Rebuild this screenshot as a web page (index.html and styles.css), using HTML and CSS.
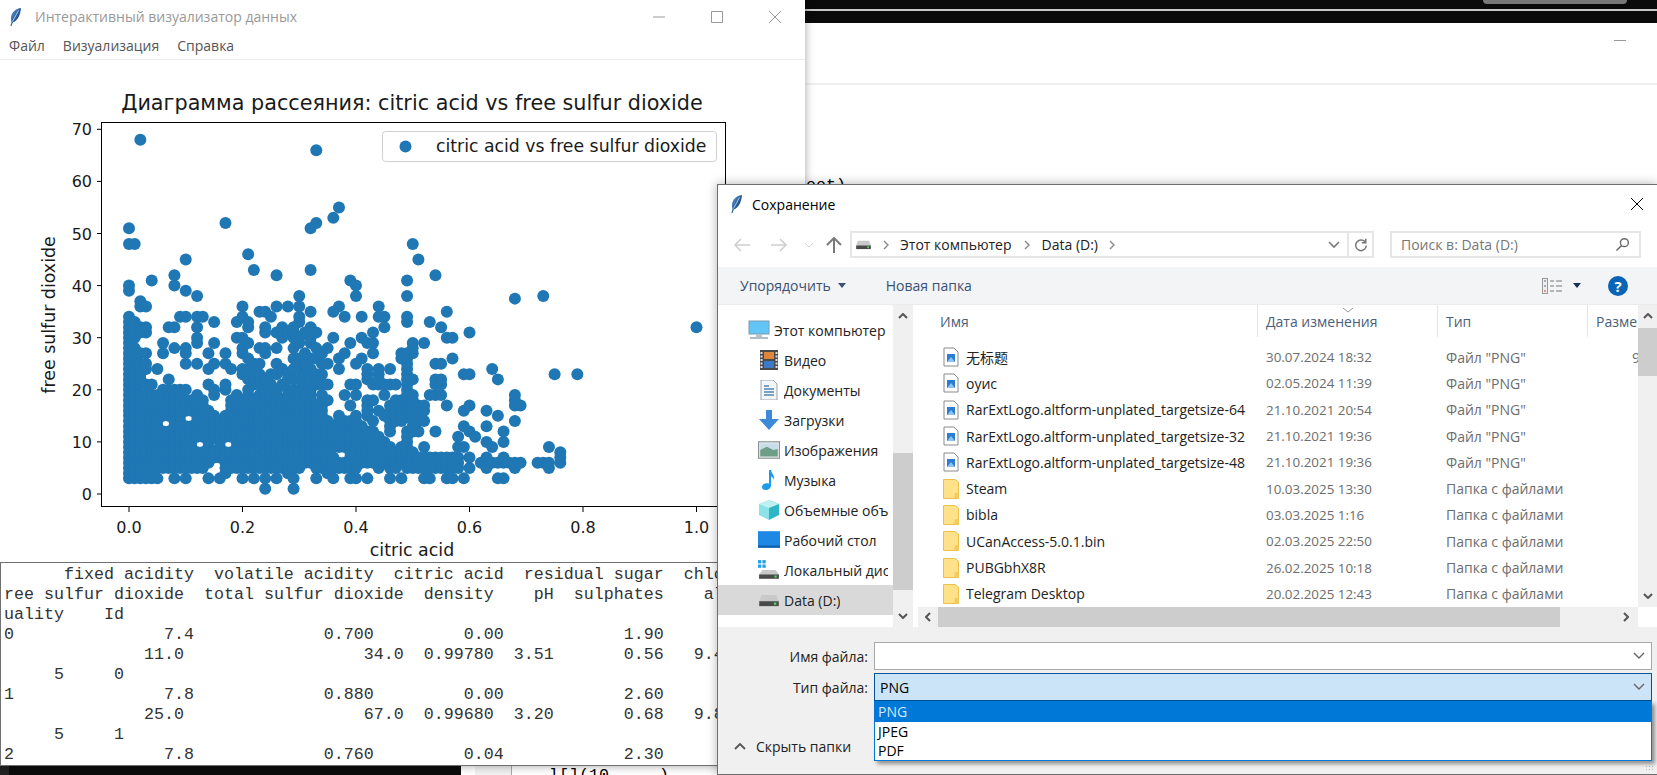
FILE: index.html
```html
<!DOCTYPE html>
<html>
<head>
    <meta charset="utf-8">
    <title>Сохранение</title>
    <link rel="stylesheet" href="styles.css">
</head>
<body>
    <svg class="defs" width="0" height="0">
        <defs>
            <linearGradient id="quill" x1="0" y1="0" x2="1" y2="1">
                <stop offset="0" stop-color="#6aa8e0"/>
                <stop offset="0.5" stop-color="#2a5f9e"/>
                <stop offset="1" stop-color="#0c1a2e"/>
            </linearGradient>
            <symbol id="i-feather" viewBox="0 0 14 20">
                <path d="M13 1C8 1.500 3.500 5 3 10.500C2.800 12.500 3.200 14 3.600 15L2.400 19L3.400 19.300L4.800 15.500C9.500 14 12.500 8 13 1Z" fill="url(#quill)"/>
                <path d="M10.500 3.500L4.500 14.500" stroke="#e8f2fb" stroke-width=".7"/>
            </symbol>
            <symbol id="i-png" viewBox="0 0 16 20">
                <path d="M1 1H11L15 5V19H1Z" fill="#fff" stroke="#8a8a8a"/>
                <rect x="4" y="7" width="8" height="8" fill="#2b7cd3"/>
                <path d="M4 15L8 10L12 15Z" fill="#8fc3f0"/>
            </symbol>
            <symbol id="i-folder" viewBox="0 0 16 20">
                <path d="M.5 .5H12L15.500 3V19.500H.5Z" fill="#ffe18a" stroke="#edc04e"/>
                <path d="M12 14H15.500V19.500H11Z" fill="#f4cb5e"/>
            </symbol>
            <symbol id="i-drive" viewBox="0 0 18 12">
                <path d="M3 2H15L17 7H1Z" fill="#c9c9c9"/>
                <rect x="1" y="7" width="16" height="4" fill="#4a4a4a"/>
                <rect x="13" y="8" width="2" height="2" fill="#4ed36a"/>
            </symbol>
            <symbol id="i-monitor" viewBox="0 0 22 20">
                <rect x="1" y="1" width="20" height="13" fill="#63c5f5" stroke="#7a9cb5"/>
                <rect x="8" y="14" width="6" height="3" fill="#b7c4cd"/>
                <rect x="2" y="17" width="18" height="2" fill="#aebdc8"/>
            </symbol>
            <symbol id="i-video" viewBox="0 0 20 20">
                <rect x="1" y="0" width="18" height="20" fill="#4a4a4a"/>
                <rect x="5" y="2" width="10" height="7" fill="#e0863a"/>
                <rect x="5" y="11" width="10" height="7" fill="#3a79c8"/>
                <path d="M2.500 2V18M17.500 2V18" stroke="#ddd" stroke-width="2" stroke-dasharray="2 1.500"/>
            </symbol>
            <symbol id="i-docs" viewBox="0 0 20 20">
                <path d="M2 0H14L18 4V20H2Z" fill="#f3f6f9" stroke="#9aa5ad"/>
                <path d="M5 6H10M5 9H15M5 12H15M5 15H15" stroke="#4f86b8" stroke-width="1.400"/>
            </symbol>
            <symbol id="i-down" viewBox="0 0 20 20">
                <path d="M7 0H13V9H20L10 20L0 9H7Z" fill="#3f8ad8"/>
            </symbol>
            <symbol id="i-pictures" viewBox="0 0 20 16">
                <rect x=".5" y=".5" width="19" height="15" fill="#e4e8ea" stroke="#8d9396"/>
                <rect x="2" y="2" width="16" height="6" fill="#c7ddea"/>
                <path d="M2 8L8 5L14 8L18 7V14H2Z" fill="#6f9e86"/>
            </symbol>
            <symbol id="i-music" viewBox="0 0 20 20">
                <path d="M10 0H12C12.500 4 16 5 15 10C14.500 7.500 13 7 12 6.500V15.500C12 18 9.500 20 6.500 20C4 20 3 18.500 3 17C3 14.500 6 12.500 10 13.500Z" fill="#1e9be8"/>
            </symbol>
            <symbol id="i-cube" viewBox="0 0 20 20">
                <path d="M10 0L20 4V15L10 20Z" fill="#2fb5c4"/>
                <path d="M10 0L0 4V15L10 20Z" fill="#8be3e6"/>
                <path d="M10 0L20 4L10 8L0 4Z" fill="#bff1f2"/>
            </symbol>
            <symbol id="i-desktop" viewBox="0 0 20 16">
                <rect x="0" y="0" width="20" height="15" fill="#1e88e5"/>
                <rect x="0" y="13" width="20" height="2" fill="#0f5fa8"/>
            </symbol>
            <symbol id="i-localdisk" viewBox="0 0 20 18">
                <rect x="0" y="0" width="3" height="3" fill="#24a0ed"/>
                <rect x="4" y="0" width="3" height="3" fill="#24a0ed"/>
                <rect x="0" y="4" width="3" height="3" fill="#24a0ed"/>
                <rect x="4" y="4" width="3" height="3" fill="#24a0ed"/>
                <path d="M4 9H16L19 13H1Z" fill="#c9c9c9"/>
                <rect x="1" y="13" width="18" height="4" fill="#4a4a4a"/>
                <rect x="15" y="14" width="2" height="2" fill="#4ed36a"/>
            </symbol>
        </defs>
    </svg>

    <!-- окно на заднем плане -->
    <div class="back-strip"><div class="back-tab"></div></div>
    <div class="back-minimize"></div>
    <div class="back-rule"></div>
    <div class="back-code">oot)</div>
    <div class="taskbar">
        <div class="taskbar-dark"></div>
        <div class="taskbar-gutter"></div>
        <div class="taskbar-code">l[](10,    )</div>
    </div>

    <!-- главное окно -->
    <div class="window main-window">
        <div class="title-bar">
            <svg class="feather"><use href="#i-feather"/></svg>
            <div class="title">Интерактивный визуализатор данных</div>
            <div class="window-buttons">
                <svg class="win-btn" viewBox="0 0 12 12"><path d="M0 6H12"/></svg>
                <svg class="win-btn" viewBox="0 0 12 12"><path d="M.5 .5H11.500V11.500H.5Z"/></svg>
                <svg class="win-btn" viewBox="0 0 12 12"><path d="M0 0L12 12M12 0L0 12"/></svg>
            </div>
        </div>
        <div class="menu-bar">
            <span>Файл</span>
            <span>Визуализация</span>
            <span>Справка</span>
        </div>
        <svg id="chart" class="chart" viewBox="0 60 805 502">
            <text class="chart-title" x="412" y="110">Диаграмма рассеяния: citric acid vs free sulfur dioxide</text>
            <g id="points"></g>
            <rect class="frame" x="101.500" y="122.500" width="624" height="384"/>
            <path class="ticks" d="M97 494H102M97 441.900H102M97 389.800H102M97 337.700H102M97 285.600H102M97 233.500H102M97 181.400H102M97 129.300H102M129 507V512M242.500 507V512M356 507V512M469.500 507V512M583 507V512M696.500 507V512"/>
            <g class="y-labels">
                <text x="92" y="500">0</text>
                <text x="92" y="448">10</text>
                <text x="92" y="396">20</text>
                <text x="92" y="344">30</text>
                <text x="92" y="292">40</text>
                <text x="92" y="240">50</text>
                <text x="92" y="187">60</text>
                <text x="92" y="135">70</text>
            </g>
            <g class="x-labels">
                <text x="129" y="533">0.0</text>
                <text x="242.500" y="533">0.2</text>
                <text x="356" y="533">0.4</text>
                <text x="469.500" y="533">0.6</text>
                <text x="583" y="533">0.8</text>
                <text x="696.500" y="533">1.0</text>
            </g>
            <text class="axis-label" x="412" y="556">citric acid</text>
            <text class="axis-label" transform="translate(55 315) rotate(-90)">free sulfur dioxide</text>
            <rect class="legend" x="382.500" y="131.500" width="334" height="30" rx="3"/>
            <circle class="dot" cx="405.500" cy="146.500" r="6"/>
            <text class="legend-text" x="436" y="152">citric acid vs free sulfur dioxide</text>
        </svg>
        <pre class="console">      fixed acidity  volatile acidity  citric acid  residual sugar  chlorides  \
ree sulfur dioxide  total sulfur dioxide  density    pH  sulphates    alcohol  \
uality    Id
0               7.4             0.700         0.00            1.90
              11.0                  34.0  0.99780  3.51       0.56   9.4
     5     0
1               7.8             0.880         0.00            2.60
              25.0                  67.0  0.99680  3.20       0.68   9.8
     5     1
2               7.8             0.760         0.04            2.30</pre>
    </div>

    <!-- диалог сохранения -->
    <div class="window dialog">
        <div class="dialog-title">
            <svg class="feather"><use href="#i-feather"/></svg>
            <div class="dialog-caption">Сохранение</div>
            <svg class="dialog-close" viewBox="0 0 12 12"><path d="M0 0L12 12M12 0L0 12"/></svg>
        </div>

        <div class="nav-row">
            <div class="nav-arrows">
                <svg class="nav-arrow" viewBox="0 0 18 14"><path d="M8 1L2 7L8 13M2 7H17"/></svg>
                <svg class="nav-arrow" viewBox="0 0 18 14"><path d="M10 1L16 7L10 13M16 7H1"/></svg>
                <svg class="nav-drop" viewBox="0 0 12 8"><path d="M2 2L6 6L10 2"/></svg>
                <svg class="nav-arrow up" viewBox="0 0 18 16"><path d="M2 8L9 1L16 8M9 1V16"/></svg>
            </div>
            <div class="address">
                <svg class="crumb-drive"><use href="#i-drive"/></svg>
                <svg class="crumb-sep" viewBox="0 0 28 10"><path d="M12 1L16 5L12 9"/></svg>
                <span>Этот компьютер</span>
                <svg class="crumb-sep wide" viewBox="0 0 30 10"><path d="M13 1L17 5L13 9"/></svg>
                <span>Data (D:)</span>
                <svg class="crumb-sep" viewBox="0 0 28 10"><path d="M12 1L16 5L12 9"/></svg>
                <svg class="address-drop" viewBox="0 0 12 8"><path d="M1 1L6 6L11 1"/></svg>
                <div class="refresh">
                    <svg viewBox="0 0 14 14"><path d="M11.500 4.500A5.300 5.300 0 1 0 12.300 7.500M11.800 .8V4.800H7.800"/></svg>
                </div>
            </div>
            <div class="search">
                <span>Поиск в: Data (D:)</span>
                <svg viewBox="0 0 16 16"><circle cx="10" cy="6" r="4.200"/><path d="M7 9.200L1.500 14.500"/></svg>
            </div>
        </div>

        <div class="toolbar">
            <span>Упорядочить</span>
            <span class="caret"></span>
            <span class="new-folder">Новая папка</span>
            <svg class="view-icon" viewBox="0 0 20 16">
                <rect x=".5" y=".5" width="5" height="15" fill="#eee" stroke="#999"/>
                <path d="M8 3H12M14 3H20M8 8H12M14 8H20M8 13H12M14 13H20" stroke="#777"/>
                <path d="M2 3H4M2 8H4" stroke="#4d6f99"/>
                <path d="M2 13H4" stroke="#d33"/>
            </svg>
            <span class="caret dark"></span>
            <div class="help">?</div>
        </div>

        <div class="browser">
            <div class="tree">
                <div class="tree-item root"><svg><use href="#i-monitor"/></svg><span>Этот компьютер</span></div>
                <div class="tree-item"><svg><use href="#i-video"/></svg><span>Видео</span></div>
                <div class="tree-item"><svg><use href="#i-docs"/></svg><span>Документы</span></div>
                <div class="tree-item"><svg><use href="#i-down"/></svg><span>Загрузки</span></div>
                <div class="tree-item"><svg><use href="#i-pictures"/></svg><span>Изображения</span></div>
                <div class="tree-item"><svg><use href="#i-music"/></svg><span>Музыка</span></div>
                <div class="tree-item"><svg><use href="#i-cube"/></svg><span>Объемные объекты</span></div>
                <div class="tree-item"><svg><use href="#i-desktop"/></svg><span>Рабочий стол</span></div>
                <div class="tree-item"><svg><use href="#i-localdisk"/></svg><span>Локальный диск (C:)</span></div>
                <div class="tree-item selected"><svg><use href="#i-drive"/></svg><span>Data (D:)</span></div>
            </div>
            <div class="vscroll tree-scroll">
                <svg class="sb-arrow" viewBox="0 0 10 6"><path d="M1 5L5 1L9 5"/></svg>
                <div class="sb-thumb"></div>
                <svg class="sb-arrow" viewBox="0 0 10 6"><path d="M1 1L5 5L9 1"/></svg>
            </div>
            <div class="files">
                <div class="file-pane">
                    <div class="file-head">
                        <div class="col-name">Имя</div>
                        <div class="col-date">Дата изменения<svg class="sort-mark" viewBox="0 0 10 5"><path d="M0 0L5 4L10 0"/></svg></div>
                        <div class="col-type">Тип</div>
                        <div class="col-size">Разме</div>
                    </div>
                    <div class="file-row"><svg><use href="#i-png"/></svg><span class="file-name cjk">无标题</span><span class="file-date">30.07.2024 18:32</span><span class="file-type">Файл "PNG"</span><span class="file-size">9</span></div>
                    <div class="file-row"><svg><use href="#i-png"/></svg><span class="file-name">оуис</span><span class="file-date">02.05.2024 11:39</span><span class="file-type">Файл "PNG"</span></div>
                    <div class="file-row"><svg><use href="#i-png"/></svg><span class="file-name">RarExtLogo.altform-unplated_targetsize-64</span><span class="file-date">21.10.2021 20:54</span><span class="file-type">Файл "PNG"</span></div>
                    <div class="file-row"><svg><use href="#i-png"/></svg><span class="file-name">RarExtLogo.altform-unplated_targetsize-32</span><span class="file-date">21.10.2021 19:36</span><span class="file-type">Файл "PNG"</span></div>
                    <div class="file-row"><svg><use href="#i-png"/></svg><span class="file-name">RarExtLogo.altform-unplated_targetsize-48</span><span class="file-date">21.10.2021 19:36</span><span class="file-type">Файл "PNG"</span></div>
                    <div class="file-row"><svg><use href="#i-folder"/></svg><span class="file-name">Steam</span><span class="file-date">10.03.2025 13:30</span><span class="file-type">Папка с файлами</span></div>
                    <div class="file-row"><svg><use href="#i-folder"/></svg><span class="file-name">bibla</span><span class="file-date">03.03.2025 1:16</span><span class="file-type">Папка с файлами</span></div>
                    <div class="file-row"><svg><use href="#i-folder"/></svg><span class="file-name">UCanAccess-5.0.1.bin</span><span class="file-date">02.03.2025 22:50</span><span class="file-type">Папка с файлами</span></div>
                    <div class="file-row"><svg><use href="#i-folder"/></svg><span class="file-name">PUBGbhX8R</span><span class="file-date">26.02.2025 10:18</span><span class="file-type">Папка с файлами</span></div>
                    <div class="file-row"><svg><use href="#i-folder"/></svg><span class="file-name">Telegram Desktop</span><span class="file-date">20.02.2025 12:43</span><span class="file-type">Папка с файлами</span></div>
                </div>
                <div class="vscroll list-scroll">
                    <svg class="sb-arrow" viewBox="0 0 10 6"><path d="M1 5L5 1L9 5"/></svg>
                    <div class="sb-thumb"></div>
                    <svg class="sb-arrow" viewBox="0 0 10 6"><path d="M1 1L5 5L9 1"/></svg>
                </div>
                <div class="hscroll">
                    <svg class="sb-arrow side" viewBox="0 0 6 10"><path d="M5 1L1 5L5 9"/></svg>
                    <div class="sb-thumb"></div>
                    <svg class="sb-arrow side" viewBox="0 0 6 10"><path d="M1 1L5 5L1 9"/></svg>
                </div>
                <div class="corner"></div>
            </div>
        </div>

        <div class="footer">
            <div class="form">
                <label>Имя файла:</label>
                <div class="combo">
                    <svg class="combo-arrow" viewBox="0 0 12 8"><path d="M1 1L6 6L11 1"/></svg>
                </div>
                <label>Тип файла:</label>
                <div class="combo open">
                    <span>PNG</span>
                    <svg class="combo-arrow" viewBox="0 0 12 8"><path d="M1 1L6 6L11 1"/></svg>
                    <div class="dropdown">
                        <div class="option active">PNG</div>
                        <div class="option">JPEG</div>
                        <div class="option">PDF</div>
                    </div>
                </div>
            </div>
            <div class="hide-folders">
                <svg viewBox="0 0 12 8"><path d="M1 7L6 2L11 7"/></svg>
                <span>Скрыть папки</span>
            </div>
            <div class="grip"></div>
        </div>
    </div>

    <script src="chart.js"></script>
</body>
</html>
```

FILE: styles.css
```css
* { box-sizing: border-box; }

html, body {
    margin: 0;
    height: 100%;
    overflow: hidden;
}
body {
    position: relative;
    background: #fff;
    font-family: "Open Sans", "Noto Sans", sans-serif;
    font-size: 14px;
    color: #000;
}
.defs { position: absolute; }

/* задний план */
.back-strip {
    position: absolute;
    left: 805px;
    right: 0;
    top: 0;
    height: 23px;
    background: #0a0a0a;
}
.back-strip::after {
    content: "";
    position: absolute;
    left: 0;
    right: 0;
    top: 9px;
    height: 2px;
    background: #c8c8c8;
}
.back-tab {
    position: absolute;
    left: 678px;
    top: 0;
    width: 144px;
    height: 4px;
    background: #777;
    border-radius: 0 0 4px 4px;
}
.back-minimize {
    position: absolute;
    left: 1614px;
    top: 40px;
    width: 12px;
    height: 1px;
    background: #999;
}
.back-rule {
    position: absolute;
    left: 805px;
    right: 0;
    top: 83px;
    height: 2px;
    background: #f0f0f0;
}
.back-code {
    position: absolute;
    left: 806px;
    top: 176px;
    font-family: "Liberation Mono", monospace;
    font-size: 16.67px;
    line-height: 20px;
}
.taskbar {
    position: absolute;
    left: 0;
    right: 0;
    top: 766px;
    height: 9px;
    display: flex;
}
.taskbar-dark {
    width: 461px;
    background: #0c0c0c;
    border-left: 9px solid #222;
}
.taskbar-gutter {
    width: 51px;
    background: #f2f2f2;
    border-left: 14px solid #fff;
    border-right: 1px solid #aaa;
}
.taskbar-code {
    margin-left: 37px;
    font-family: "Liberation Mono", monospace;
    font-size: 16.67px;
    line-height: 20px;
    white-space: pre;
}

/* окна */
.window {
    position: absolute;
    background: #fff;
    display: flex;
    flex-direction: column;
}
.main-window {
    left: 0;
    top: 0;
    width: 805px;
    height: 766px;
    box-shadow: 0 0 9px rgba(0,0,0,0.35);
    overflow: hidden;
}
.title-bar {
    display: flex;
    align-items: center;
    height: 33px;
    padding-left: 8px;
    flex: none;
}
.feather {
    width: 14px;
    height: 20px;
    flex: none;
}
.title {
    margin-left: 13px;
    color: #999;
}
.window-buttons {
    margin-left: auto;
    display: flex;
    gap: 46px;
    padding-right: 24px;
}
.win-btn {
    width: 12px;
    height: 12px;
    fill: none;
    stroke: #999;
}
.menu-bar {
    display: flex;
    gap: 18px;
    height: 27px;
    padding: 3px 0 0 9px;
    border-bottom: 1px solid #ececec;
    color: #555;
    flex: none;
}
.chart {
    width: 805px;
    height: 502px;
    flex: none;
    font-family: "DejaVu Sans", sans-serif;
    display: block;
}
.chart text { fill: #1a1a1a; }
.chart-title {
    font-size: 20.75px;
    text-anchor: middle;
}
.frame {
    fill: none;
    stroke: #000;
}
.ticks {
    fill: none;
    stroke: #000;
}
.y-labels text {
    font-size: 16px;
    text-anchor: end;
}
.x-labels text {
    font-size: 16px;
    text-anchor: middle;
}
.axis-label {
    font-size: 17.4px;
    text-anchor: middle;
}
.legend {
    fill: rgba(255,255,255,0.8);
    stroke: #d0d0d0;
}
.legend-text { font-size: 17.3px; }
.dot { fill: #1f77b4; }
.console {
    flex: 1;
    width: 717px;
    margin: 0;
    padding: 2px 3px;
    border: 1px solid #707070;
    border-right: none;
    font-family: "Liberation Mono", monospace;
    font-size: 16.67px;
    line-height: 20px;
    color: #333;
    overflow: hidden;
    background: #fff;
}

/* диалог */
.dialog {
    left: 717px;
    top: 184px;
    width: 940px;
    height: 591px;
    border-top: 1px solid #6e6e6e;
    border-left: 1px solid #6e6e6e;
    border-bottom: 1px solid #6e6e6e;
    box-shadow: 0 0 10px rgba(0,0,0,0.3);
}
.dialog-title {
    display: flex;
    align-items: center;
    height: 38px;
    padding-left: 11px;
    flex: none;
}
.dialog-caption { margin-left: 9px; }
.dialog-close {
    margin-left: auto;
    margin-right: 14px;
    width: 12px;
    height: 12px;
    stroke: #000;
    fill: none;
}
.nav-row {
    display: flex;
    height: 44px;
    padding-top: 8px;
    flex: none;
}
.nav-arrows {
    width: 132px;
    height: 27px;
    display: flex;
    align-items: center;
    padding-left: 15px;
}
.nav-arrow {
    width: 18px;
    height: 14px;
    fill: none;
    stroke: #cfcfcf;
    stroke-width: 1.6;
    margin-right: 19px;
}
.nav-arrow.up {
    stroke: #7a7a7a;
    stroke-width: 2;
    margin: 0 0 0 10px;
    height: 16px;
}
.nav-drop {
    width: 12px;
    height: 8px;
    fill: none;
    stroke: #d4d4d4;
    margin-left: -4px;
}
.address {
    width: 524px;
    height: 27px;
    border: 2px solid #e6e6e6;
    display: flex;
    align-items: center;
    padding-left: 3px;
    color: #222;
}
.crumb-drive {
    width: 17px;
    height: 11px;
    flex: none;
}
.crumb-sep {
    width: 28px;
    height: 10px;
    flex: none;
    fill: none;
    stroke: #8a8a8a;
    stroke-width: 1.4;
}
.crumb-sep.wide { width: 30px; }
.address-drop {
    margin-left: auto;
    width: 12px;
    height: 8px;
    fill: none;
    stroke: #777;
    stroke-width: 1.6;
}
.refresh {
    margin-left: 7px;
    width: 25px;
    height: 100%;
    border-left: 2px solid #e6e6e6;
    display: flex;
    align-items: center;
    justify-content: center;
}
.refresh svg {
    width: 14px;
    height: 14px;
    fill: none;
    stroke: #777;
    stroke-width: 1.5;
}
.search {
    margin-left: 16px;
    width: 251px;
    height: 27px;
    border: 2px solid #e6e6e6;
    display: flex;
    align-items: center;
    padding: 0 9px;
    color: #777;
}
.search svg {
    margin-left: auto;
    width: 15px;
    height: 15px;
    fill: none;
    stroke: #6a6a6a;
    stroke-width: 1.5;
}
.toolbar {
    display: flex;
    align-items: center;
    height: 38px;
    padding-left: 22px;
    background: #f3f4f6;
    border-bottom: 1px solid #ebebeb;
    color: #3b5173;
    flex: none;
}
.caret {
    margin-left: 7px;
    width: 0;
    height: 0;
    border-left: 4.5px solid transparent;
    border-right: 4.5px solid transparent;
    border-top: 5px solid #3b5173;
}
.caret.dark {
    margin-left: 11px;
    border-top-color: #1c2f55;
}
.new-folder { margin-left: 40px; }
.view-icon {
    margin-left: auto;
    width: 20px;
    height: 16px;
}
.help {
    margin: 0 29px 0 27px;
    width: 20px;
    height: 20px;
    border-radius: 50%;
    background: #0b63b5;
    color: #fff;
    font-weight: 700;
    font-size: 15px;
    line-height: 20px;
    text-align: center;
}
.browser {
    display: flex;
    height: 322px;
    flex: none;
}
.tree {
    width: 175px;
    padding-top: 10px;
    overflow: hidden;
    flex: none;
    color: #222;
}
.tree-item {
    display: flex;
    align-items: center;
    height: 30px;
    padding: 0 5px 0 40px;
    gap: 4px;
    white-space: nowrap;
}
.tree-item span {
    overflow: hidden;
}
.tree-item svg {
    width: 22px;
    height: 20px;
    flex: none;
}
.tree-item.root { padding-left: 30px; }
.tree-item.selected { background: #d9d9d9; }
.vscroll {
    display: flex;
    flex-direction: column;
    align-items: center;
    background: #f0f0f0;
    flex: none;
}
.tree-scroll {
    width: 20px;
    margin-right: 5px;
}
.tree-scroll .sb-thumb {
    height: 137px;
    margin-top: auto;
    margin-bottom: 15px;
}
.sb-arrow {
    width: 10px;
    height: 6px;
    fill: none;
    stroke: #555;
    stroke-width: 2;
    margin: 8px 0;
    flex: none;
}
.sb-arrow.side {
    width: 6px;
    height: 10px;
    margin: 0 7px;
}
.sb-thumb {
    background: #cdcdcd;
    width: 100%;
}
.files {
    flex: 1;
    min-width: 0;
    display: grid;
    grid-template-columns: 720px 20px;
    grid-template-rows: 302px 20px;
}
.file-pane { overflow: hidden; }
.file-head {
    display: grid;
    grid-template-columns: 340px 180px 150px 50px;
    height: 32px;
    margin-bottom: 7px;
    color: #4c607a;
}
.file-head > div {
    position: relative;
    display: flex;
    align-items: center;
    padding-left: 8px;
    border-right: 1px solid #e5e5e5;
    white-space: nowrap;
    overflow: hidden;
}
.file-head .col-name { padding-left: 22px; }
.file-head .col-size { border-right: none; }
.sort-mark {
    position: absolute;
    left: 85px;
    top: 3px;
    width: 10px;
    height: 5px;
    fill: none;
    stroke: #999;
}
.file-row {
    display: grid;
    grid-template-columns: 48px 292px 180px 150px 50px;
    align-items: center;
    height: 26.3px;
    color: #6d6d6d;
    white-space: nowrap;
}
.file-row svg {
    width: 16px;
    height: 20px;
    margin-left: 25px;
}
.file-name {
    color: #222;
    overflow: hidden;
}
.cjk { font-family: "Open Sans", "Noto Sans CJK SC", sans-serif; }
.file-date {
    padding-left: 8px;
    font-size: 13.4px;
}
.file-type { padding-left: 8px; }
.file-size { padding-left: 44px; }
.list-scroll { width: 20px; }
.list-scroll .sb-thumb {
    height: 48px;
    margin-top: 1px;
    margin-bottom: auto;
}
.hscroll {
    display: flex;
    align-items: center;
    background: #f0f0f0;
}
.hscroll .sb-thumb {
    width: 622px;
    height: 100%;
    flex: none;
}
.hscroll .sb-arrow:last-child { margin-left: auto; margin-right: 9px; }
.corner { background: #fff; }
.footer {
    position: relative;
    flex: 1;
    background: #f0f0f0;
    padding-top: 15px;
}
.form {
    display: grid;
    grid-template-columns: 150px 778px;
    column-gap: 6px;
    row-gap: 3px;
    align-items: center;
}
.form label {
    text-align: right;
    color: #222;
}
.combo {
    position: relative;
    display: flex;
    align-items: center;
    height: 28px;
    padding-left: 5px;
    background: #fff;
    border: 1.5px solid #a8a8a8;
}
.combo.open {
    background: #cce4f7;
    border-color: #005499;
}
.combo-arrow {
    position: absolute;
    right: 6px;
    top: 9px;
    width: 12px;
    height: 8px;
    fill: none;
    stroke: #666;
    stroke-width: 1.4;
}
.dropdown {
    position: absolute;
    left: -1px;
    right: -1px;
    top: 27px;
    height: 60px;
    background: #fff;
    border: 1px solid #0078d7;
    border-top: none;
    box-shadow: 3px 3px 4px rgba(0,0,0,0.4);
    z-index: 2;
}
.option {
    height: 19px;
    line-height: 19px;
    padding-left: 3px;
}
.option.active {
    height: 21px;
    line-height: 21px;
    background: #0078d7;
    color: #d5e8f7;
}
.hide-folders {
    display: flex;
    align-items: center;
    gap: 10px;
    height: 20px;
    margin-top: 35px;
    padding-left: 16px;
    color: #222;
}
.hide-folders svg {
    width: 12px;
    height: 8px;
    fill: none;
    stroke: #555;
    stroke-width: 1.8;
}
.grip {
    position: absolute;
    right: 2px;
    bottom: 2px;
    width: 10px;
    height: 7px;
    background-image: radial-gradient(#bbb 1px, transparent 1px);
    background-size: 3px 3px;
}
```

FILE: chart.js
```js
// точки диаграммы: номер столбца (citric acid * 100) -> значения free sulfur dioxide
var columns = {
    0: "3-34,39,40,48,51",
    1: "3-24,26,28,30-33,48",
    2: "3-19,21-25,27,31,32,36,37,68",
    3: "3-19,21,24,25,27,31,32,36",
    4: "3,5-19,21,41",
    5: "3,5-19,24",
    6: "5-12,15-20,27,29",
    7: "5-12,15-20,22,32",
    8: "3,5-20,28,32,40,42",
    9: "5-20,34",
    10: "3,5-13,16-18,20,25,27,28,34,39,45",
    11: "5-13,16,18",
    12: "5-8,11-19,25,29,30,32,34,38",
    13: "5-8,11-18,34",
    14: "3,6-16,21,24,27",
    15: "7,8,11-15,19,20,25,29,33",
    16: "3,7-14",
    17: "4-8,11-15,20,21,25,27,52",
    18: "5-8,11-18,24",
    19: "5-19,30,33",
    20: "3,5-18,23,24,27,28,30,34,36",
    21: "5-20,22,24,26,29,32,33,46",
    22: "3,5-14,16-18,21,23,25,43",
    23: "5-7,9-19,21,23,25,28,35",
    24: "1,3,5-7,9-20,22,27,28,31,32,35",
    25: "5-16,18,19,21,23,34",
    26: "3,5-20,23,25,28,31,36,42",
    27: "5-9,11-14,16-18,21,24,30,32",
    28: "4-7,9-13,15-20,22,23,31,36",
    29: "1,3,5-7,9-20,22,24,26,28,30-32",
    30: "5-20,22,24,26,29,30,33,34,36,38",
    31: "6-19,21,23,25,27,31",
    32: "6-20,22,24,26,29,30,32,35,43,51",
    33: "3,5-17,21,23,26,28,31,52,66",
    34: "5-19,21,23,25,27",
    35: "4-14,18,21,25,28",
    36: "3,5-7,9-13,30,35,53",
    37: "5-6,9-15,24,26,36,55",
    38: "5-6,9-14,19,27,34",
    39: "3,5-11,13,14,17,21,29,41",
    40: "3,5-8,10-12,14,15,19,21,25,38,40",
    41: "6-9,11,13,26,30,34",
    42: "3,6-12,15-18,22-24,29",
    43: "6-9,11,12,14,18,21,27,29,31",
    44: "5-8,10,11,16,21-24,34,36",
    45: "6-8,10,15,19,21,32,34",
    46: "3,5-7,9,12-17,21,24",
    47: "5-8,14-16,18,21",
    48: "3,6-9,14-18,26,27",
    49: "5-12,15-27,33,34,38,41",
    50: "5-8,12-16,18,19,22,27-29,48",
    51: "5-7,12,14,16,17,45",
    52: "3,5-7,9,14,16,17,29",
    53: "3,5-7,19,33",
    54: "5-7,12,19,21,22,25,42",
    55: "5-7,19,21,22,25,32",
    56: "3,5-7,17,30,35",
    57: "3,5-7,26,30",
    58: "5-7,9,11",
    59: "3,9,13,16,23",
    60: "5,7,12,17,23,31",
    61: "11",
    62: "6",
    63: "5-7,10,13,16",
    64: "6,9,24",
    65: "3,6,15,22",
    66: "3,6,7,10,12",
    67: "6",
    68: "5,6,14,17-19,37.5",
    69: "6,17",
    72: "6",
    73: "6,38",
    74: "5,6,9",
    75: "23",
    76: "6-8",
    79: "23",
    100: "32"
};

var group = document.getElementById("points");

function addPoint(col, value) {
    var dot = document.createElementNS("http://www.w3.org/2000/svg", "circle");
    dot.setAttribute("class", "dot");
    dot.setAttribute("cx", 129 + col * 5.675);
    dot.setAttribute("cy", 494 - value * 5.21);
    dot.setAttribute("r", 6);
    group.appendChild(dot);
}

Object.keys(columns).forEach(function (col) {
    columns[col].split(",").forEach(function (part) {
        var range = part.split("-").map(Number);
        var last = range.length > 1 ? range[1] : range[0];
        for (var value = range[0]; value <= last; value++) {
            addPoint(Number(col), value);
        }
    });
});
```
